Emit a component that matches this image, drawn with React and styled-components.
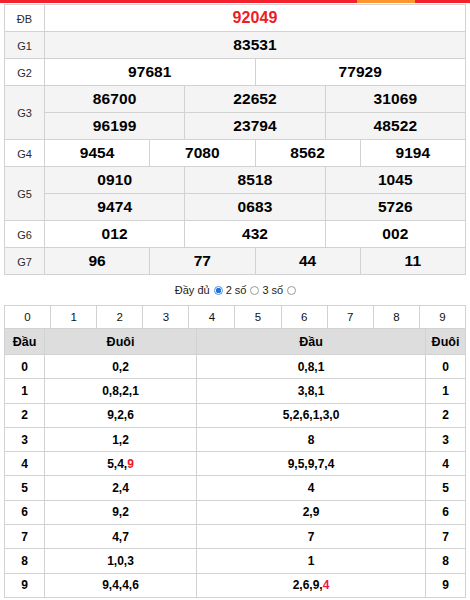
import React from "react";
import styled, { createGlobalStyle } from "styled-components";

const Global = createGlobalStyle`
  html, body { margin: 0; padding: 0; background: #fff; }
  body { font-family: "Liberation Sans", Arial, sans-serif; color: #000; }
`;

const Page = styled.div`
  width: 470px;
`;

const TopBar = styled.div`
  height: 3px;
  display: grid;
  grid-template-columns: 357px 58px 1fr;
  margin-bottom: 1px;
`;

const BarSeg = styled.div`
  background: ${(p) => p.$c};
`;

const Results = styled.div`
  margin: 0 4px;
  display: grid;
  grid-template-columns: 40px repeat(12, 1fr);
  grid-auto-rows: 27px;
  border-top: 1px solid #d2d2d2;
  border-left: 1px solid #d2d2d2;
`;

const Cell = styled.div`
  box-sizing: border-box;
  border-right: 1px solid #d2d2d2;
  border-bottom: 1px solid #d2d2d2;
  background: ${(p) => (p.$alt ? "#f4f4f4" : "#fff")};
  display: flex;
  align-items: center;
  justify-content: center;
  grid-column: span ${(p) => p.$span || 1};
  grid-row: span ${(p) => p.$rows || 1};
`;

const Label = styled(Cell)`
  font-size: 11px;
  color: #2a2a2a;
  padding-top: 1px;
`;

const Num = styled(Cell)`
  font-size: ${(p) => (p.$special ? "16px" : "15.5px")};
  font-weight: bold;
  color: ${(p) => (p.$special ? "#ee1c25" : "#000")};
  letter-spacing: 0.1px;
`;

const Options = styled.div`
  height: 30px;
  display: flex;
  align-items: center;
  justify-content: center;
  font-size: 11px;
  color: #222;
  gap: 2px;
  padding-left: 2px;
`;

const Radio = styled.span`
  box-sizing: border-box;
  width: 9px;
  height: 9px;
  border-radius: 50%;
  border: 1px solid ${(p) => (p.$on ? "#4a90e2" : "#9a9a9a")};
  background: ${(p) => (p.$on ? "radial-gradient(circle, #1e74e0 0 2.5px, #fff 3px)" : "#fff")};
  display: inline-block;
  margin: 0 1px 0 2px;
`;

const Digits = styled.div`
  margin: 0 4px;
  display: grid;
  grid-template-columns: repeat(10, 1fr);
  border-top: 1px solid #d2d2d2;
  border-left: 1px solid #d2d2d2;
`;

const DigitCell = styled.div`
  box-sizing: border-box;
  height: 23px;
  border-right: 1px solid #d2d2d2;
  border-bottom: 1px solid #d2d2d2;
  display: flex;
  align-items: center;
  justify-content: center;
  font-size: 11.5px;
  color: #111;
`;

const Stats = styled.div`
  margin: 0 4px;
  display: grid;
  grid-template-columns: 40px 152px 1fr 40px;
  border-left: 1px solid #d2d2d2;
`;

const StatCell = styled.div`
  box-sizing: border-box;
  height: ${(p) => (p.$head ? "26px" : "24.3px")};
  border-right: 1px solid #d2d2d2;
  border-bottom: 1px solid #d2d2d2;
  background: ${(p) => (p.$head ? "#dddddd" : "#fff")};
  display: flex;
  align-items: center;
  justify-content: center;
  font-size: ${(p) => (p.$head ? "12.5px" : "12px")};
  font-weight: bold;
  color: #000;
`;

const Red = styled.span`
  color: ${(p) => p.$c || "#f0141e"};
`;

const rows = [
  { label: "ĐB", nums: ["92049"], special: true },
  { label: "G1", nums: ["83531"] },
  { label: "G2", nums: ["97681", "77929"] },
  { label: "G3", nums: ["86700", "22652", "31069", "96199", "23794", "48522"], per: 3 },
  { label: "G4", nums: ["9454", "7080", "8562", "9194"] },
  { label: "G5", nums: ["0910", "8518", "1045", "9474", "0683", "5726"], per: 3 },
  { label: "G6", nums: ["012", "432", "002"] },
  { label: "G7", nums: ["96", "77", "44", "11"] },
];

const stats = [
  ["0", ["0,2"], ["0,8,1"]],
  ["1", ["0,8,2,1"], ["3,8,1"]],
  ["2", ["9,2,6"], ["5,2,6,1,3,0"]],
  ["3", ["1,2"], ["8"]],
  ["4", ["5,4,", <Red key="r">9</Red>], ["9,5,9,7,4"]],
  ["5", ["2,4"], ["4"]],
  ["6", ["9,2"], ["2,9"]],
  ["7", ["4,7"], ["7"]],
  ["8", ["1,0,3"], ["1"]],
  ["9", ["9,4,4,6"], ["2,6,9,", <Red key="r" $c="#e8194a">4</Red>]],
];

export default function App() {
  return (
    <Page>
      <Global />
      <TopBar>
        <BarSeg $c="#f5222d" />
        <BarSeg $c="#ff9531" />
        <BarSeg $c="#f5222d" />
      </TopBar>
      <Results>
        {rows.map((r, i) => {
          const alt = i % 2 === 1;
          const per = r.per || r.nums.length;
          const span = 12 / per;
          const lines = r.nums.length / per;
          return (
            <React.Fragment key={r.label}>
              <Label $alt={alt} $rows={lines}>{r.label}</Label>
              {r.nums.map((n, j) => (
                <Num key={j} $alt={alt} $span={span} $special={r.special}>
                  {n}
                </Num>
              ))}
            </React.Fragment>
          );
        })}
      </Results>
      <Options>
        Đầy đủ<Radio $on /> 2 số<Radio /> 3 số<Radio />
      </Options>
      <Digits>
        {[0, 1, 2, 3, 4, 5, 6, 7, 8, 9].map((d) => (
          <DigitCell key={d}>{d}</DigitCell>
        ))}
      </Digits>
      <Stats>
        <StatCell $head>Đầu</StatCell>
        <StatCell $head>Đuôi</StatCell>
        <StatCell $head>Đầu</StatCell>
        <StatCell $head>Đuôi</StatCell>
        {stats.map(([d, tail, head]) => (
          <React.Fragment key={d}>
            <StatCell>{d}</StatCell>
            <StatCell>{tail}</StatCell>
            <StatCell>{head}</StatCell>
            <StatCell>{d}</StatCell>
          </React.Fragment>
        ))}
      </Stats>
    </Page>
  );
}
